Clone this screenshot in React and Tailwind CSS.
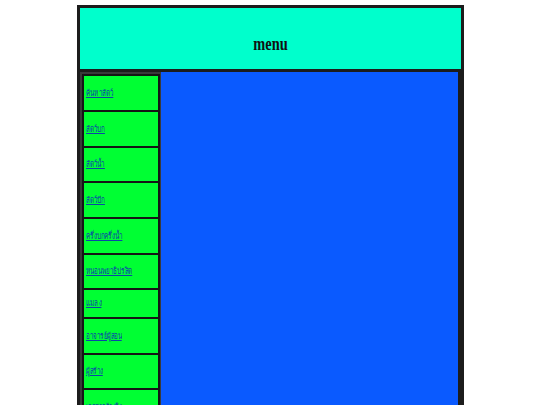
import React from 'react';

const links = [
  { label: 'ค้นหาสัตว์', h: 'h-[34px]' },
  { label: 'สัตว์บก', h: 'h-[34px]' },
  { label: 'สัตว์น้ำ', h: 'h-[33px]' },
  { label: 'สัตว์ปีก', h: 'h-[34px]' },
  { label: 'ครึ่งบกครึ่งน้ำ', h: 'h-[34px]' },
  { label: 'หนอนพยาธิปรสิต', h: 'h-[33px]' },
  { label: 'แมลง', h: 'h-[27px]' },
  { label: 'อาจารย์ผู้สอน', h: 'h-[34px]' },
  { label: 'ผู้สร้าง', h: 'h-[33px]' },
  { label: 'เอกสารอ้างอิง', h: 'h-[34px]' },
];

export default function App() {
  return (
    <div className="min-h-screen bg-white overflow-hidden">
      <div className="ml-[77px] mt-[5px] w-[387px] bg-[#1c1c1c] p-[3px] flex flex-col gap-[3px]">
        <div className="h-[61px] bg-[#00FFCC] flex items-center justify-center pt-[12px]">
          <span className="inline-block scale-x-[0.8] text-[18px] font-bold text-[#111] font-['Liberation_Serif',serif]">menu</span>
        </div>
        <div className="flex">
          <div className="w-[81px] bg-[#3a3a3a] pl-[2px] pr-[1px] pt-[2px]">
            <div className="bg-[#151515] p-[2px] flex flex-col gap-[2px]">
              {links.map((l) => (
                <div key={l.label} className={`${l.h} bg-[#00FF33] flex items-center pl-[2px] overflow-hidden`}>
                  <a href="#" className="inline-block whitespace-nowrap origin-left scale-x-[0.7] text-[9px] leading-none text-[#0b45a8] underline font-['Liberation_Sans','Noto_Sans',sans-serif]">
                    {l.label}
                  </a>
                </div>
              ))}
            </div>
          </div>
          <div className="flex-1 bg-[#0A5AFF] mr-[3px] min-h-[400px]" />
        </div>
      </div>
    </div>
  );
}
